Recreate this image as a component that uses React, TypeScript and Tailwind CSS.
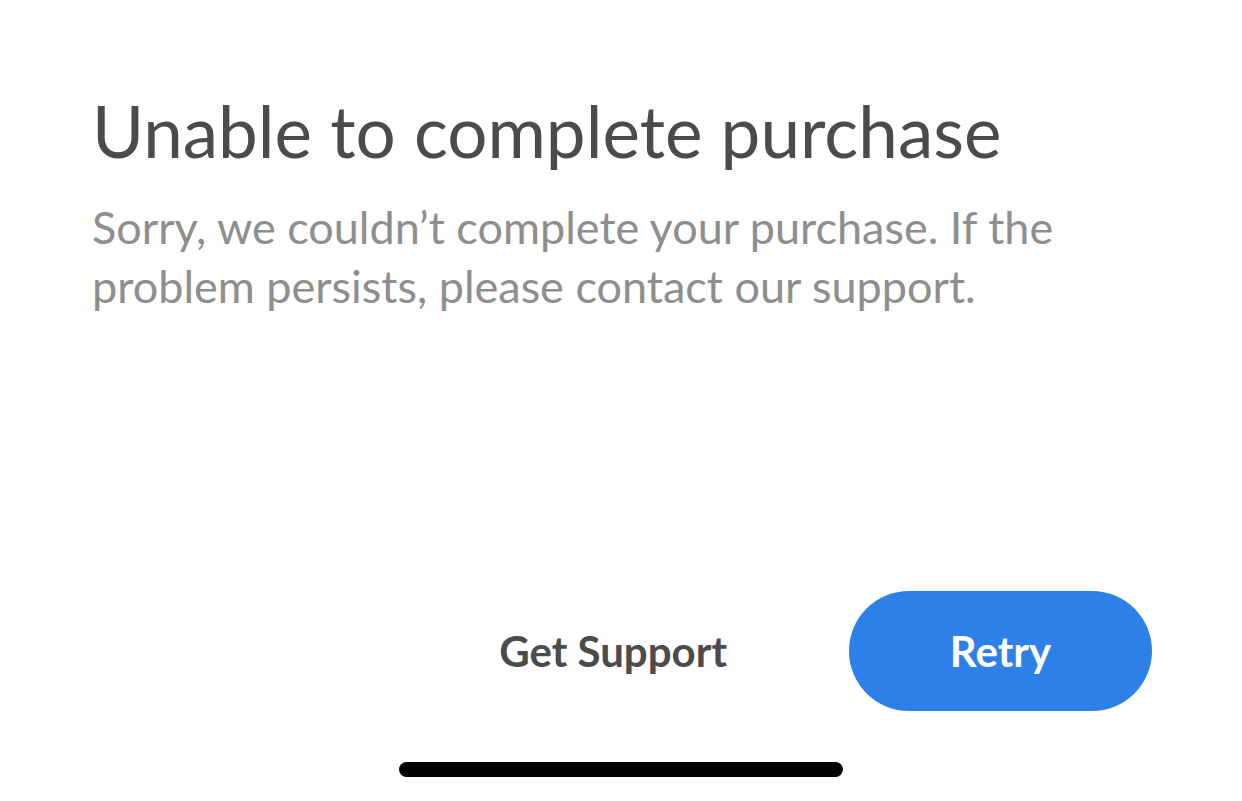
export default function App() {
  return (
    <div className="relative h-[801px] w-[1242px] overflow-hidden bg-white font-['Lato',sans-serif]">
      <div className="px-[92px] pt-[95px]">
        <h1 className="text-[71px] leading-none font-normal text-[#4b4b4b]">
          Unable to complete purchase
        </h1>
        <p className="mt-[32px] max-w-[1000px] text-[45px] leading-[59px] text-[#8e8e8e]">
          Sorry, we couldn’t complete your purchase. If the problem persists, please contact our support.
        </p>
      </div>

      <div className="absolute right-[90px] top-[591px] flex items-center gap-[122px]">
        <button className="text-[42px] font-bold text-[#4b4b4b]">Get Support</button>
        <button className="flex h-[120px] w-[303px] items-center justify-center rounded-full bg-[#2c80e8] text-[42px] font-bold text-white">
          Retry
        </button>
      </div>

      <div className="absolute left-[399px] top-[762px] h-[15px] w-[444px] rounded-full bg-black" />
    </div>
  )
}
